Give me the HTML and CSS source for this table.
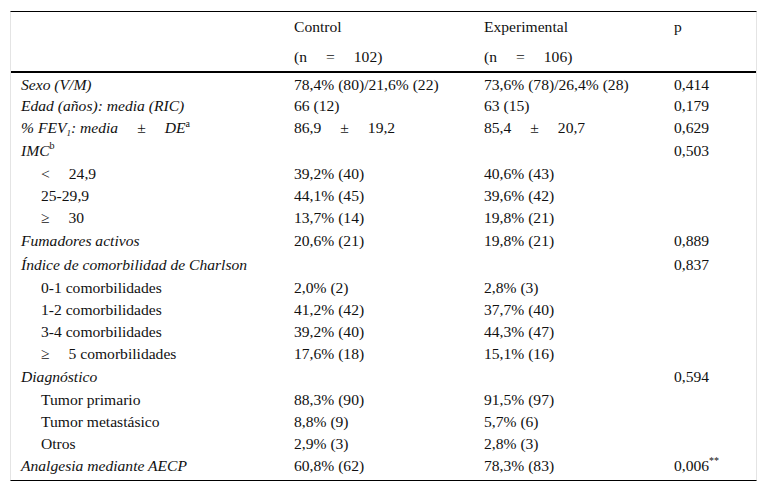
FILE: index.html
```html
<!DOCTYPE html>
<html lang="es">
<head>
<meta charset="utf-8">
<title>Tabla</title>
<link rel="stylesheet" href="styles.css">
</head>
<body>
<div class="frame">
<table class="data">
  <colgroup>
    <col class="c1"><col class="c2"><col class="c3"><col class="c4">
  </colgroup>
  <thead>
    <tr class="h1"><th></th><th>Control</th><th>Experimental</th><th>p</th></tr>
    <tr class="h2"><th></th><th>(n<span class="gap"></span>=<span class="gap"></span>102)</th><th>(n<span class="gap"></span>=<span class="gap"></span>106)</th><th></th></tr>
  </thead>
  <tbody>
    <tr><td class="it">Sexo (V/M)</td><td>78,4% (80)/21,6% (22)</td><td>73,6% (78)/26,4% (28)</td><td>0,414</td></tr>
    <tr><td class="it">Edad (años): media (RIC)</td><td>66 (12)</td><td>63 (15)</td><td>0,179</td></tr>
    <tr><td class="it">% FEV<sub>1</sub>: media<span class="gap"></span><span class="rm">±</span><span class="gap"></span>DE<sup class="rm">a</sup></td><td>86,9<span class="gap"></span>±<span class="gap"></span>19,2</td><td>85,4<span class="gap"></span>±<span class="gap"></span>20,7</td><td>0,629</td></tr>
    <tr class="tall"><td class="it">IMC<sup class="rm up">b</sup></td><td></td><td></td><td>0,503</td></tr>
    <tr><td class="sub">&lt;<span class="gap"></span>24,9</td><td>39,2% (40)</td><td>40,6% (43)</td><td></td></tr>
    <tr><td class="sub">25-29,9</td><td>44,1% (45)</td><td>39,6% (42)</td><td></td></tr>
    <tr><td class="sub">≥<span class="gap"></span>30</td><td>13,7% (14)</td><td>19,8% (21)</td><td></td></tr>
    <tr class="tall"><td class="it">Fumadores activos</td><td>20,6% (21)</td><td>19,8% (21)</td><td>0,889</td></tr>
    <tr class="tall"><td class="it">Índice de comorbilidad de Charlson</td><td></td><td></td><td>0,837</td></tr>
    <tr><td class="sub">0-1 comorbilidades</td><td>2,0% (2)</td><td>2,8% (3)</td><td></td></tr>
    <tr><td class="sub">1-2 comorbilidades</td><td>41,2% (42)</td><td>37,7% (40)</td><td></td></tr>
    <tr><td class="sub">3-4 comorbilidades</td><td>39,2% (40)</td><td>44,3% (47)</td><td></td></tr>
    <tr><td class="sub">≥<span class="gap"></span>5 comorbilidades</td><td>17,6% (18)</td><td>15,1% (16)</td><td></td></tr>
    <tr class="tall"><td class="it">Diagnóstico</td><td></td><td></td><td>0,594</td></tr>
    <tr><td class="sub">Tumor primario</td><td>88,3% (90)</td><td>91,5% (97)</td><td></td></tr>
    <tr><td class="sub">Tumor metastásico</td><td>8,8% (9)</td><td>5,7% (6)</td><td></td></tr>
    <tr><td class="sub">Otros</td><td>2,9% (3)</td><td>2,8% (3)</td><td></td></tr>
    <tr><td class="it">Analgesia mediante AECP</td><td>60,8% (62)</td><td>78,3% (83)</td><td>0,006<sup class="up">**</sup></td></tr>
  </tbody>
</table>
</div>
</body>
</html>
```
FILE: styles.css
```css
html, body {
  margin: 0;
  padding: 0;
  background: #fff;
}
body, table, th, td, sup, sub, span {
  font-family: "Liberation Serif", Tinos, "Times New Roman", Times, serif;
}
body {
  font-size: 15.6px;
  color: #111;
}
.frame {
  margin: 11px 10px 0 10px;
  width: 745px;
  border-top: 1px solid #000;
  border-bottom: 1px solid #000;
  border-left: 1px solid #e4e4e4;
  border-right: 1px solid #e4e4e4;
  padding-bottom: 4px;
}
.data {
  width: 100%;
  border-collapse: collapse;
  table-layout: fixed;
  font-size: 15.6px;
}
.c1 { width: 272px; }
.c2 { width: 190px; }
.c3 { width: 190px; }
.c4 { width: auto; }
.data th, .data td {
  padding: 0 0 0 11px;
  text-align: left;
  vertical-align: middle;
  font-weight: normal;
  line-height: 18px;
  white-space: nowrap;
}
.data td {
  padding-top: 2px;
}
.data th:first-child, .data td:first-child {
  padding-left: 10px;
}
.h1, .h2 { height: 30px; }
.h2 th { border-bottom: 2px solid #000; padding-top: 1px; }
.data tbody tr { height: 22px; }
.data tbody tr.tall { height: 24px; }
.it { font-style: italic; }
.data td.sub { padding-left: 30px; }
.rm { font-style: normal; }
.gap { display: inline-block; width: 19px; }
sup, sub {
  font-size: 10px;
  line-height: 0;
}
sup { vertical-align: 6px; }
sup.up { vertical-align: 7px; }
sub { vertical-align: -3px; font-size: 9px; }
```
